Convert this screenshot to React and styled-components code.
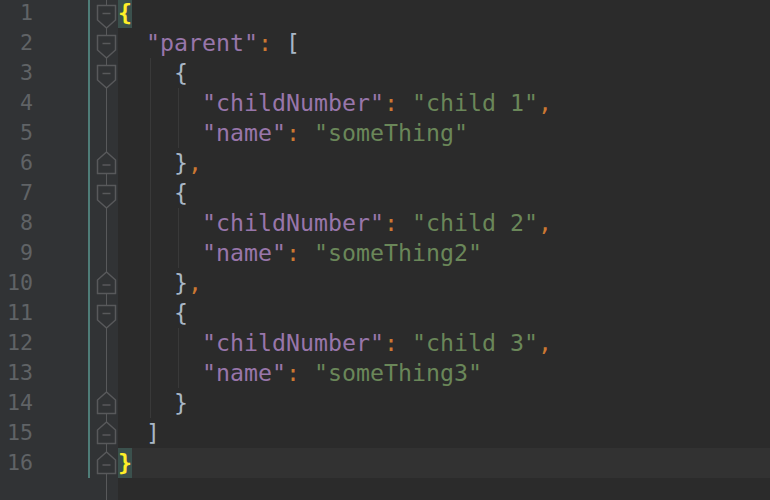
import React from 'react'
import styled, { createGlobalStyle } from 'styled-components'

const Global = createGlobalStyle`
    html, body { margin: 0; padding: 0; background: #2b2b2b; overflow: hidden; }
`

const Editor = styled.div`
    display: flex;
    height: 500px;
    width: 770px;
    background: #2b2b2b;
    font-family: "DejaVu Sans Mono", "Liberation Mono", monospace;
`

const Gutter = styled.div`
    display: flex;
    flex-direction: column;
    width: 90px;
    background: #313335;
    padding-top: 0;
    margin-top: -2px;
`

const LineNo = styled.div`
    box-sizing: border-box;
    height: 30px;
    line-height: 30px;
    padding-right: 55px;
    text-align: right;
    font-size: 21.6px;
    color: #606366;
    border-right: 2px solid ${props => (props.changed ? '#4f7d78' : 'transparent')};
`

const FoldColumn = styled.div`
    position: relative;
    width: 28px;
    background: #313335;
    display: flex;
    flex-direction: column;
    margin-top: -2px;

    &::before {
        content: '';
        position: absolute;
        left: 16px;
        top: 0;
        bottom: -2px;
        width: 1px;
        background: #58595b;
    }
`

const FoldCell = styled.div`
    position: relative;
    height: 30px;
    z-index: ${props => (props.open ? 2 : 1)};

    svg {
        position: absolute;
        left: 0;
        top: 0;
        overflow: visible;
    }
`

const Code = styled.div`
    flex: 1;
    display: flex;
    flex-direction: column;
    margin-top: -2px;
`

const Line = styled.div`
    display: flex;
    height: 30px;
    line-height: 30px;
    font-size: 23.25px;
    white-space: pre;
    background: ${props => (props.current ? '#323232' : 'transparent')};
`

const Indent = styled.span`
    display: inline-block;
    height: 30px;
    width: ${props => (props.guide ? '23px' : '28px')};
    margin-left: ${props => (props.guide ? '4px' : '0')};
    border-left: ${props => (props.guide ? '1px solid #393939' : 'none')};
`

const Tok = styled.span`
    color: ${props => props.color};
`

const Match = styled.span`
    display: inline-block;
    height: 30px;
    color: #ffef28;
    font-weight: bold;
    background: #3b514d;
`

const C = {
    key: '#9876aa',
    str: '#6a8759',
    punct: '#cc7832',
    brace: '#a9b7c6',
}

const Marker = ({ open }) => (
    <svg width="28" height="30">
        {open ? (
            <path d="M7.5 7.5 H25.5 V22 L16.5 30 L7.5 22 Z" fill="#313335" stroke="#58595b" strokeWidth="1.5" />
        ) : (
            <path d="M7.5 25.5 H25.5 V12 L16.5 4 L7.5 12 Z" fill="#313335" stroke="#58595b" strokeWidth="1.5" />
        )}
        <line x1="12.5" x2="20.5" y1={open ? 15.5 : 17} y2={open ? 15.5 : 17} stroke="#58595b" strokeWidth="1.5" />
    </svg>
)

// each line: indent units (2 spaces each), tokens, fold marker
const lines = [
    { indent: 0, fold: 'open', toks: [['match', '{']] },
    { indent: 1, fold: 'open', toks: [[C.key, '"parent"'], [C.punct, ':'], [C.brace, ' [']] },
    { indent: 2, fold: 'open', toks: [[C.brace, '{']] },
    { indent: 3, toks: [[C.key, '"childNumber"'], [C.punct, ': '], [C.str, '"child 1"'], [C.punct, ',']] },
    { indent: 3, toks: [[C.key, '"name"'], [C.punct, ': '], [C.str, '"someThing"']] },
    { indent: 2, fold: 'close', toks: [[C.brace, '}'], [C.punct, ',']] },
    { indent: 2, fold: 'open', toks: [[C.brace, '{']] },
    { indent: 3, toks: [[C.key, '"childNumber"'], [C.punct, ': '], [C.str, '"child 2"'], [C.punct, ',']] },
    { indent: 3, toks: [[C.key, '"name"'], [C.punct, ': '], [C.str, '"someThing2"']] },
    { indent: 2, fold: 'close', toks: [[C.brace, '}'], [C.punct, ',']] },
    { indent: 2, fold: 'open', toks: [[C.brace, '{']] },
    { indent: 3, toks: [[C.key, '"childNumber"'], [C.punct, ': '], [C.str, '"child 3"'], [C.punct, ',']] },
    { indent: 3, toks: [[C.key, '"name"'], [C.punct, ': '], [C.str, '"someThing3"']] },
    { indent: 2, fold: 'close', toks: [[C.brace, '}']] },
    { indent: 1, fold: 'close', toks: [[C.brace, ']']] },
    { indent: 0, fold: 'close', toks: [['match', '}']] },
]

const App = () => {
    return (
        <>
            <Global />
            <Editor>
                <Gutter>
                    {lines.map((l, i) => (
                        <LineNo key={i} changed>{i + 1}</LineNo>
                    ))}
                </Gutter>
                <FoldColumn>
                    {lines.map((l, i) => (
                        <FoldCell key={i} open={l.fold === 'open'}>
                            {l.fold && <Marker open={l.fold === 'open'} />}
                        </FoldCell>
                    ))}
                </FoldColumn>
                <Code>
                    {lines.map((l, i) => (
                        <Line key={i} current={i === lines.length - 1}>
                            {Array.from({ length: l.indent }).map((_, n) => (
                                <Indent key={n} guide={n > 0} />
                            ))}
                            {l.toks.map(([c, t], n) =>
                                c === 'match'
                                    ? <Match key={n}>{t}</Match>
                                    : <Tok key={n} color={c}>{t}</Tok>
                            )}
                        </Line>
                    ))}
                </Code>
            </Editor>
        </>
    )
}

export default App
